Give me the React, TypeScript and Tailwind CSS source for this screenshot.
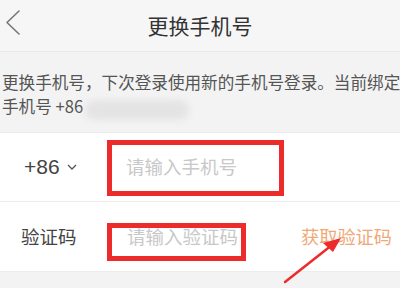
/**
 * ChangePhonePage - 更换手机号页面 (with annotation marks)
 */

const FONT = "font-['Noto_Sans_CJK_SC','Noto_Sans',sans-serif]"

function BackIcon() {
  return (
    <svg width="16" height="26" viewBox="0 0 16 26" className="text-[#777]">
      <polyline
        points="13,1 1,12.5 13,24"
        fill="none"
        stroke="currentColor"
        strokeWidth="1.6"
        strokeLinecap="round"
        strokeLinejoin="round"
      />
    </svg>
  )
}

function ChevronDown() {
  return (
    <svg width="10" height="6" viewBox="0 0 10 6" className="text-[#555]">
      <polyline points="1,1 5,5 9,1" fill="none" stroke="currentColor" strokeWidth="1.3" />
    </svg>
  )
}

export default function App() {
  return (
    <div className={`relative w-[400px] h-[288px] overflow-hidden bg-[#f3f3f3] ${FONT}`}>
      {/* Header */}
      <div className="relative flex h-[52px] items-center justify-center border-b border-[#e8e8e8] bg-[#f6f6f6]">
        <div className="absolute left-[6px] top-[10px]">
          <BackIcon />
        </div>
        <h1 className="text-[21px] text-[#333] leading-none">更换手机号</h1>
      </div>

      {/* Notice */}
      <div className="h-[80px] pl-[2px] pt-[20px] text-[16.6px] leading-[21.5px] text-[#555]">
        <div className="whitespace-nowrap">更换手机号，下次登录使用新的手机号登录。当前绑定</div>
        <div className="flex items-center whitespace-nowrap">
          <span>手机号 +86</span>
          <span className="ml-[2px] mt-[6px] h-[20px] w-[104px] rounded-full bg-[#e4e4e4] blur-[3px]" />
        </div>
      </div>

      {/* Phone row */}
      <div className="relative flex h-[70px] items-center border-y border-[#ececec] bg-white">
        <div className="flex w-[126px] items-center gap-[7px] pl-[24px]">
          <span className="font-['Liberation_Sans',sans-serif] text-[21px] text-[#444]">+86</span>
          <ChevronDown />
        </div>
        <span className="text-[18.5px] text-[#c8c8c8]">请输入手机号</span>
        <div className="absolute left-[107px] top-[7px] h-[56px] w-[177px] border-[5px] border-[#ee2b2b]" />
      </div>

      {/* Code row */}
      <div className="relative flex h-[70px] items-center border-b border-[#ececec] bg-white">
        <span className="w-[127px] pl-[21px] text-[18.5px] text-[#444]">验证码</span>
        <span className="text-[18.5px] text-[#c8c8c8]">请输入验证码</span>
        <span className="ml-auto pr-[8px] text-[18.2px] text-[#efa878]">获取验证码</span>
        <div className="absolute left-[107px] top-[21px] h-[38px] w-[139px] border-[5px] border-[#ee2b2b]" />
      </div>

      {/* Arrow annotation */}
      <svg className="absolute left-0 top-0" width="400" height="288" viewBox="0 0 400 288">
        <line x1="285" y1="282" x2="332" y2="245" stroke="#ee2b2b" strokeWidth="2.5" strokeLinecap="round" />
        <polygon points="341,238 323,243 333,252" fill="#ee2b2b" />
      </svg>
    </div>
  )
}
